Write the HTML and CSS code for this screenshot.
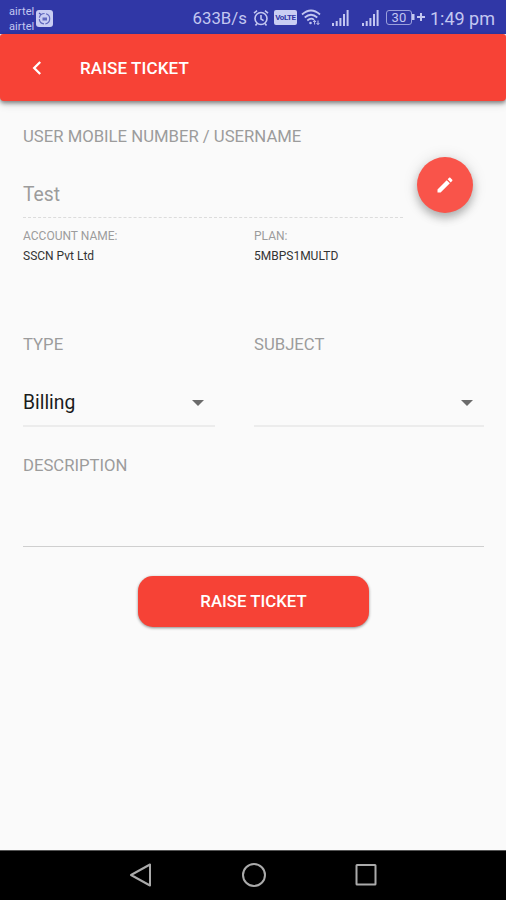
FILE: index.html
```html
<!DOCTYPE html>
<html lang="en">

<head>
    <meta charset="UTF-8">
    <meta name="viewport" content="width=device-width, initial-scale=1.0">
    <title>Raise Ticket</title>
    <link rel="stylesheet" href="styles.css">
</head>

<body>

    <div class="statusbar">
        <div class="carriers">
            <span>airtel</span>
            <span>airtel</span>
        </div>
        <svg class="app-icon" width="17" height="17" viewBox="0 0 17 17">
            <rect width="17" height="17" rx="3" fill="#c9cdf3" />
            <circle cx="8.5" cy="8.7" r="5.2" fill="none" stroke="#6168be" stroke-width="1.2" stroke-dasharray="7 1.5" />
            <path d="M6.5 7.5h4.5v3H6.5z" fill="#6168be" />
            <path d="M3 3l2 1.5" stroke="#4a52b0" stroke-width="1.2" />
        </svg>
        <span class="speed">633B/s</span>
        <svg class="alarm" width="16" height="18" viewBox="0 0 16 18" fill="none" stroke="#c3c7f1" stroke-width="1.6">
            <circle cx="8" cy="9.5" r="6" />
            <path d="M8 6v4l2.6 1.6M1 4.2L4 1.7M15 4.2L12 1.7M4 14.5l-1.5 2M12 14.5l1.5 2" />
        </svg>
        <span class="volte">VoLTE</span>
        <svg class="wifi" width="20" height="17" viewBox="0 0 20 17" fill="none" stroke="#c3c7f1" stroke-width="1.7">
            <path d="M1 5.5Q10 -2.5 19 5.5M3.7 8.5Q10 3 16.3 8.5M6.3 11.5Q10 8.3 13 10.8" />
            <circle cx="9.5" cy="14" r="1.3" fill="#c3c7f1" stroke="none" />
            <path d="M13.6 15.5v-4M12.2 13l1.4-1.6L15 13M17 11.5v4M15.6 14l1.4 1.6 1.4-1.6" stroke-width="1" />
        </svg>
        <svg class="signal" width="17" height="16" viewBox="0 0 17 16" fill="#c3c7f1">
            <path d="M0 13h2v3H0zM3.7 11h2v5h-2zM7.4 8h2v8h-2zM11 4h2v12h-2zM14.6 0h2v16h-2z" />
        </svg>
        <svg class="signal second" width="17" height="16" viewBox="0 0 17 16" fill="#c3c7f1">
            <path d="M0 13h2v3H0zM3.7 11h2v5h-2zM7.4 8h2v8h-2zM11 4h2v12h-2zM14.6 0h2v16h-2z" />
        </svg>
        <span class="battery">30</span>
        <svg class="charging" width="13" height="12" viewBox="0 0 13 12" fill="#c3c7f1">
            <path d="M0 3h2.5v6H0zM8 2h2v3h3v2h-3v3H8V7H5V5h3z" />
        </svg>
        <span class="clock">1:49 pm</span>
    </div>

    <div class="screen">
        <header class="appbar">
            <svg class="back" width="10" height="14" viewBox="0 0 10 14" fill="none" stroke="#fff" stroke-width="2.3">
                <path d="M8.2 1L2.2 7l6 6" />
            </svg>
            <h1 class="title">RAISE TICKET</h1>
        </header>

        <main class="form">
            <div class="user-row">
                <div class="field user">
                    <div class="label">USER MOBILE NUMBER / USERNAME</div>
                    <div class="value disabled">Test</div>
                </div>
                <button class="fab" type="button" aria-label="Edit">
                    <svg width="20" height="20" viewBox="0 0 24 24" fill="#fff">
                        <path d="M3 17.25V21h3.75L17.81 9.94l-3.75-3.75L3 17.25zM20.71 7.04c.39-.39.39-1.02 0-1.41l-2.34-2.34c-.39-.39-1.02-.39-1.41 0l-1.83 1.83 3.75 3.75 1.83-1.83z" />
                    </svg>
                </button>
            </div>

            <div class="columns info">
                <div>
                    <div class="info-label">ACCOUNT NAME:</div>
                    <div class="info-value">SSCN Pvt Ltd</div>
                </div>
                <div>
                    <div class="info-label">PLAN:</div>
                    <div class="info-value">5MBPS1MULTD</div>
                </div>
            </div>

            <div class="columns selects">
                <div class="field">
                    <div class="label">TYPE</div>
                    <div class="value select"><span>Billing</span><i class="arrow"></i></div>
                </div>
                <div class="field">
                    <div class="label">SUBJECT</div>
                    <div class="value select"><span></span><i class="arrow"></i></div>
                </div>
            </div>

            <div class="field description">
                <div class="label">DESCRIPTION</div>
                <div class="value textarea"></div>
            </div>

            <button class="submit" type="button">RAISE TICKET</button>
        </main>
    </div>

    <nav class="navbar">
        <svg width="24" height="26" viewBox="0 0 24 26">
            <path d="M2 13L21 2.5v21z" />
        </svg>
        <svg width="26" height="26" viewBox="0 0 26 26">
            <circle cx="13" cy="13" r="11" />
        </svg>
        <svg width="24" height="26" viewBox="0 0 24 26">
            <rect x="2.5" y="3" width="19" height="19.5" rx="0.5" />
        </svg>
    </nav>

</body>

</html>
```
FILE: styles.css
```css
* {
    box-sizing: border-box;
}

body {
    margin: 0;
    height: 900px;
    display: flex;
    flex-direction: column;
    overflow: hidden;
    background-color: #fafafa;
    font-family: Roboto, "Liberation Sans", sans-serif;
}

/* status bar */
.statusbar {
    height: 34px;
    flex-shrink: 0;
    padding: 0 11px 0 9px;
    display: flex;
    align-items: center;
    background-color: #3037a6;
    color: #c3c7f1;
    white-space: nowrap;
}

.carriers {
    width: 27px;
    padding-top: 3px;
    display: flex;
    flex-direction: column;
    font-size: 11px;
    line-height: 15px;
    letter-spacing: 0.1px;
}

.app-icon {
    margin-top: 2px;
    margin-right: auto;
}

.speed {
    font-size: 16.8px;
    margin: 2px 6px 0 0;
}

.alarm {
    margin: 1px 5px 0 0;
}

.volte {
    width: 23px;
    height: 15px;
    margin: 1px 4px 0 0;
    border-radius: 2px;
    background-color: #c9cdf3;
    color: #3037a6;
    font-size: 8px;
    font-weight: 700;
    line-height: 15px;
    text-align: center;
    letter-spacing: -0.4px;
}

.wifi {
    margin-right: 11px;
}

.signal {
    margin: 1px 13px 0 0;
}

.signal.second {
    margin-right: 7px;
}

.battery {
    width: 26px;
    height: 15px;
    border: 1px solid #9ba0dc;
    border-radius: 3px;
    font-size: 13px;
    line-height: 14px;
    text-align: center;
}

.charging {
    margin-right: 5px;
}

.clock {
    font-size: 18px;
    margin-top: 2px;
}

/* app bar */
.screen {
    flex: 1;
    display: flex;
    flex-direction: column;
}

.appbar {
    height: 67px;
    padding-left: 32px;
    display: flex;
    align-items: center;
    background-color: #f74236;
    border-radius: 3px 3px 4px 4px;
    box-shadow: 0 2px 4px rgba(0, 0, 0, 0.45), 0 4px 8px rgba(0, 0, 0, 0.12);
}

.title {
    margin: 0 0 0 38px;
    color: #fff;
    font-size: 17px;
    font-weight: 500;
    line-height: 20px;
    letter-spacing: 0.1px;
}

/* form */
.form {
    flex: 1;
    padding: 26px 22px 0 23px;
    display: flex;
    flex-direction: column;
}

.label {
    color: #9c9c9c;
    font-size: 16.7px;
    line-height: 20px;
    white-space: nowrap;
}

.value {
    height: 72px;
    padding-top: 22px;
    border-bottom: 2px solid #ececec;
    color: #1c1c1c;
    font-size: 19.3px;
    line-height: 52px;
}

.user-row {
    display: flex;
    justify-content: space-between;
    padding-right: 11px;
}

.user {
    width: 380px;
}

.disabled {
    height: 71px;
    border-bottom: 1px dashed #dcdcdc;
    color: #9c9c9c;
}

.fab {
    width: 56px;
    height: 56px;
    margin-top: 30px;
    padding: 0;
    display: flex;
    align-items: center;
    justify-content: center;
    border: 0;
    border-radius: 50%;
    background-color: #f9544a;
    box-shadow: 0 5px 8px rgba(0, 0, 0, 0.25), 0 1px 16px rgba(0, 0, 0, 0.12);
}

.columns {
    display: grid;
    grid-template-columns: 192px 230px;
    column-gap: 39px;
}

.info {
    margin-top: 10px;
    font-size: 12px;
}

.info-label {
    color: #9c9c9c;
    line-height: 16px;
}

.info-value {
    margin-top: 4px;
    color: #333;
    line-height: 17px;
}

.selects {
    margin-top: 70px;
}

.select {
    display: flex;
    justify-content: space-between;
    padding-right: 11px;
}

.arrow {
    width: 0;
    height: 0;
    margin-top: 23px;
    border: 6px solid transparent;
    border-top-color: #6b6b6b;
    border-bottom: 0;
}

.description {
    margin-top: 29px;
}

.textarea {
    height: 71px;
    border-bottom: 1px solid #cfcfcf;
}

.submit {
    width: 231px;
    height: 51px;
    margin: 29px 0 0 115px;
    padding: 0 0 1px;
    border: 0;
    border-radius: 15px;
    background-color: #f64236;
    box-shadow: 0 1px 3px rgba(0, 0, 0, 0.45);
    color: #fff;
    font-family: inherit;
    font-size: 16.8px;
    font-weight: 500;
}

/* navigation bar */
.navbar {
    height: 50px;
    flex-shrink: 0;
    padding: 0 128px 2px 129px;
    display: flex;
    align-items: center;
    justify-content: space-between;
    background-color: #000;
    border-top: 1px solid #555;
}

.navbar svg {
    fill: none;
    stroke: #aaa;
    stroke-width: 2;
    stroke-linejoin: round;
}
```
